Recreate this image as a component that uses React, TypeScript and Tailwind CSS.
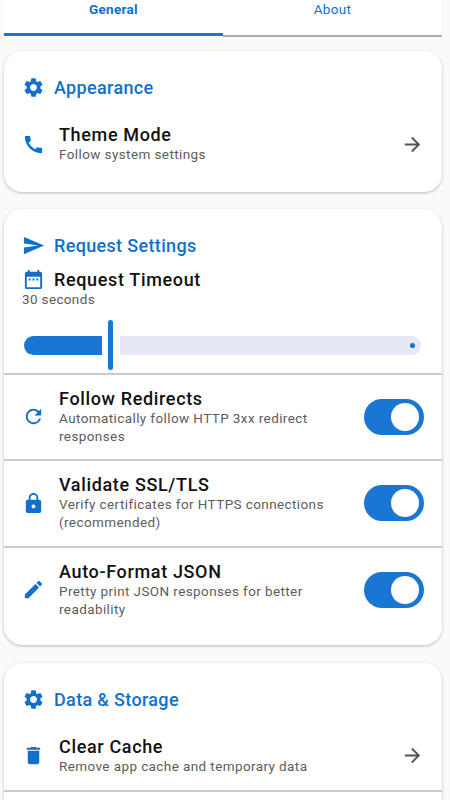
import type { ReactNode } from "react";
import type { IconType } from "react-icons";
import {
  MdArrowForward,
  MdCall,
  MdCreate,
  MdDateRange,
  MdDelete,
  MdLock,
  MdRefresh,
  MdSend,
  MdSettings,
} from "react-icons/md";

function Card({ className, children }: { className: string; children: ReactNode }) {
  return (
    <section
      className={`flex shrink-0 flex-col rounded-[18px] bg-white shadow-[0_1px_3px_rgba(0,0,0,0.25)] ${className}`}
    >
      {children}
    </section>
  );
}

function CardTitle({ icon: Icon, title }: { icon: IconType; title: string }) {
  return (
    <h2 className="flex h-6 items-center gap-[9px] px-[18px] text-[18px] font-medium tracking-[0.34px] text-[#1070cc]">
      <Icon className="size-[23px]" />
      {title}
    </h2>
  );
}

type RowProps = {
  icon: IconType;
  title: string;
  text: string;
  className: string;
  children: ReactNode;
};

function Row({ icon: Icon, title, text, className, children }: RowProps) {
  return (
    <div className={`flex items-center px-[18px] ${className}`}>
      <Icon className="size-[23px] shrink-0 text-[#1070cc]" />
      <div className="ml-[14px] w-[290px]">
        <h3 className="text-[18px] font-medium leading-[20px] tracking-[0.65px] text-[#111]">{title}</h3>
        <p className="text-[13.5px] leading-[18px] tracking-[0.4px] text-[#5c5c5c]">{text}</p>
      </div>
      <div className="ml-auto shrink-0">{children}</div>
    </div>
  );
}

function Toggle() {
  return (
    <button
      role="switch"
      aria-checked="true"
      className="flex h-9 w-[60px] items-center justify-end rounded-full bg-[#1976d2] pr-[5px]"
    >
      <span className="size-7 rounded-full bg-white" />
    </button>
  );
}

function TimeoutSlider() {
  return (
    <div className="ml-5 mr-[21px] flex h-[50px] items-center">
      <div className="h-[19px] w-[78px] rounded-l-full rounded-r-[2px] bg-[#1976d2]" />
      <div className="ml-1.5 mr-[7px] h-[50px] w-[5px] rounded-full bg-[#1976d2]" />
      <div className="flex h-[19px] flex-1 items-center justify-end rounded-l-[2px] rounded-r-full bg-[#e6e9f5] pr-[6px]">
        <span className="size-[5px] rounded-full bg-[#1070cc]" />
      </div>
    </div>
  );
}

const switches = [
  {
    icon: MdRefresh,
    title: "Follow Redirects",
    text: "Automatically follow HTTP 3xx redirect responses",
  },
  {
    icon: MdLock,
    title: "Validate SSL/TLS",
    text: "Verify certificates for HTTPS connections (recommended)",
  },
  {
    icon: MdCreate,
    title: "Auto-Format JSON",
    text: "Pretty print JSON responses for better readability",
  },
];

export default function App() {
  return (
    <div className="flex h-[800px] w-[450px] flex-col overflow-hidden bg-[#fafafa] pl-1 pr-2 font-[Roboto,sans-serif]">
      <nav className="flex h-[37px] shrink-0 bg-white text-[13.5px] leading-[18px] tracking-[0.3px] text-[#1070cc]">
        <button className="mb-px flex flex-1 items-start justify-center border-b-[3px] border-[#1976d2] font-bold">
          General
        </button>
        <button className="flex flex-1 items-start justify-center border-b-2 border-[#b0b0b0]">
          About
        </button>
      </nav>

      <Card className="mt-[14px] h-[141px] pt-[24px]">
        <CardTitle icon={MdSettings} title="Appearance" />
        <Row
          icon={MdCall}
          title="Theme Mode"
          text="Follow system settings"
          className="mt-[26px]"
        >
          <MdArrowForward className="size-[23px] text-[#555]" />
        </Row>
      </Card>

      <Card className="mt-[17px] h-[436px] pt-[24px]">
        <CardTitle icon={MdSend} title="Request Settings" />
        <div className="mt-[10px] flex h-6 items-center gap-[9px] px-[18px]">
          <MdDateRange className="size-[23px] text-[#1070cc]" />
          <h3 className="text-[18px] font-medium tracking-[0.65px] text-[#111]">Request Timeout</h3>
        </div>
        <p className="px-[18px] text-[13.5px] leading-[16px] tracking-[0.35px] text-[#5c5c5c]">30 seconds</p>
        <div className="mt-[13px]">
          <TimeoutSlider />
        </div>
        <div className="mt-[2.5px]">
          {switches.map((item) => (
            <Row
              key={item.title}
              {...item}
              className="h-[86.5px] border-t-2 border-[#cbcbcb]"
            >
              <Toggle />
            </Row>
          ))}
        </div>
      </Card>

      <Card className="mt-[18px] h-[160px] pt-[24px]">
        <CardTitle icon={MdSettings} title="Data & Storage" />
        <Row
          icon={MdDelete}
          title="Clear Cache"
          text="Remove app cache and temporary data"
          className="mt-[16px] h-[65px] border-b-2 border-[#cbcbcb] pb-[6px]"
        >
          <MdArrowForward className="size-[23px] text-[#555]" />
        </Row>
      </Card>
    </div>
  );
}
